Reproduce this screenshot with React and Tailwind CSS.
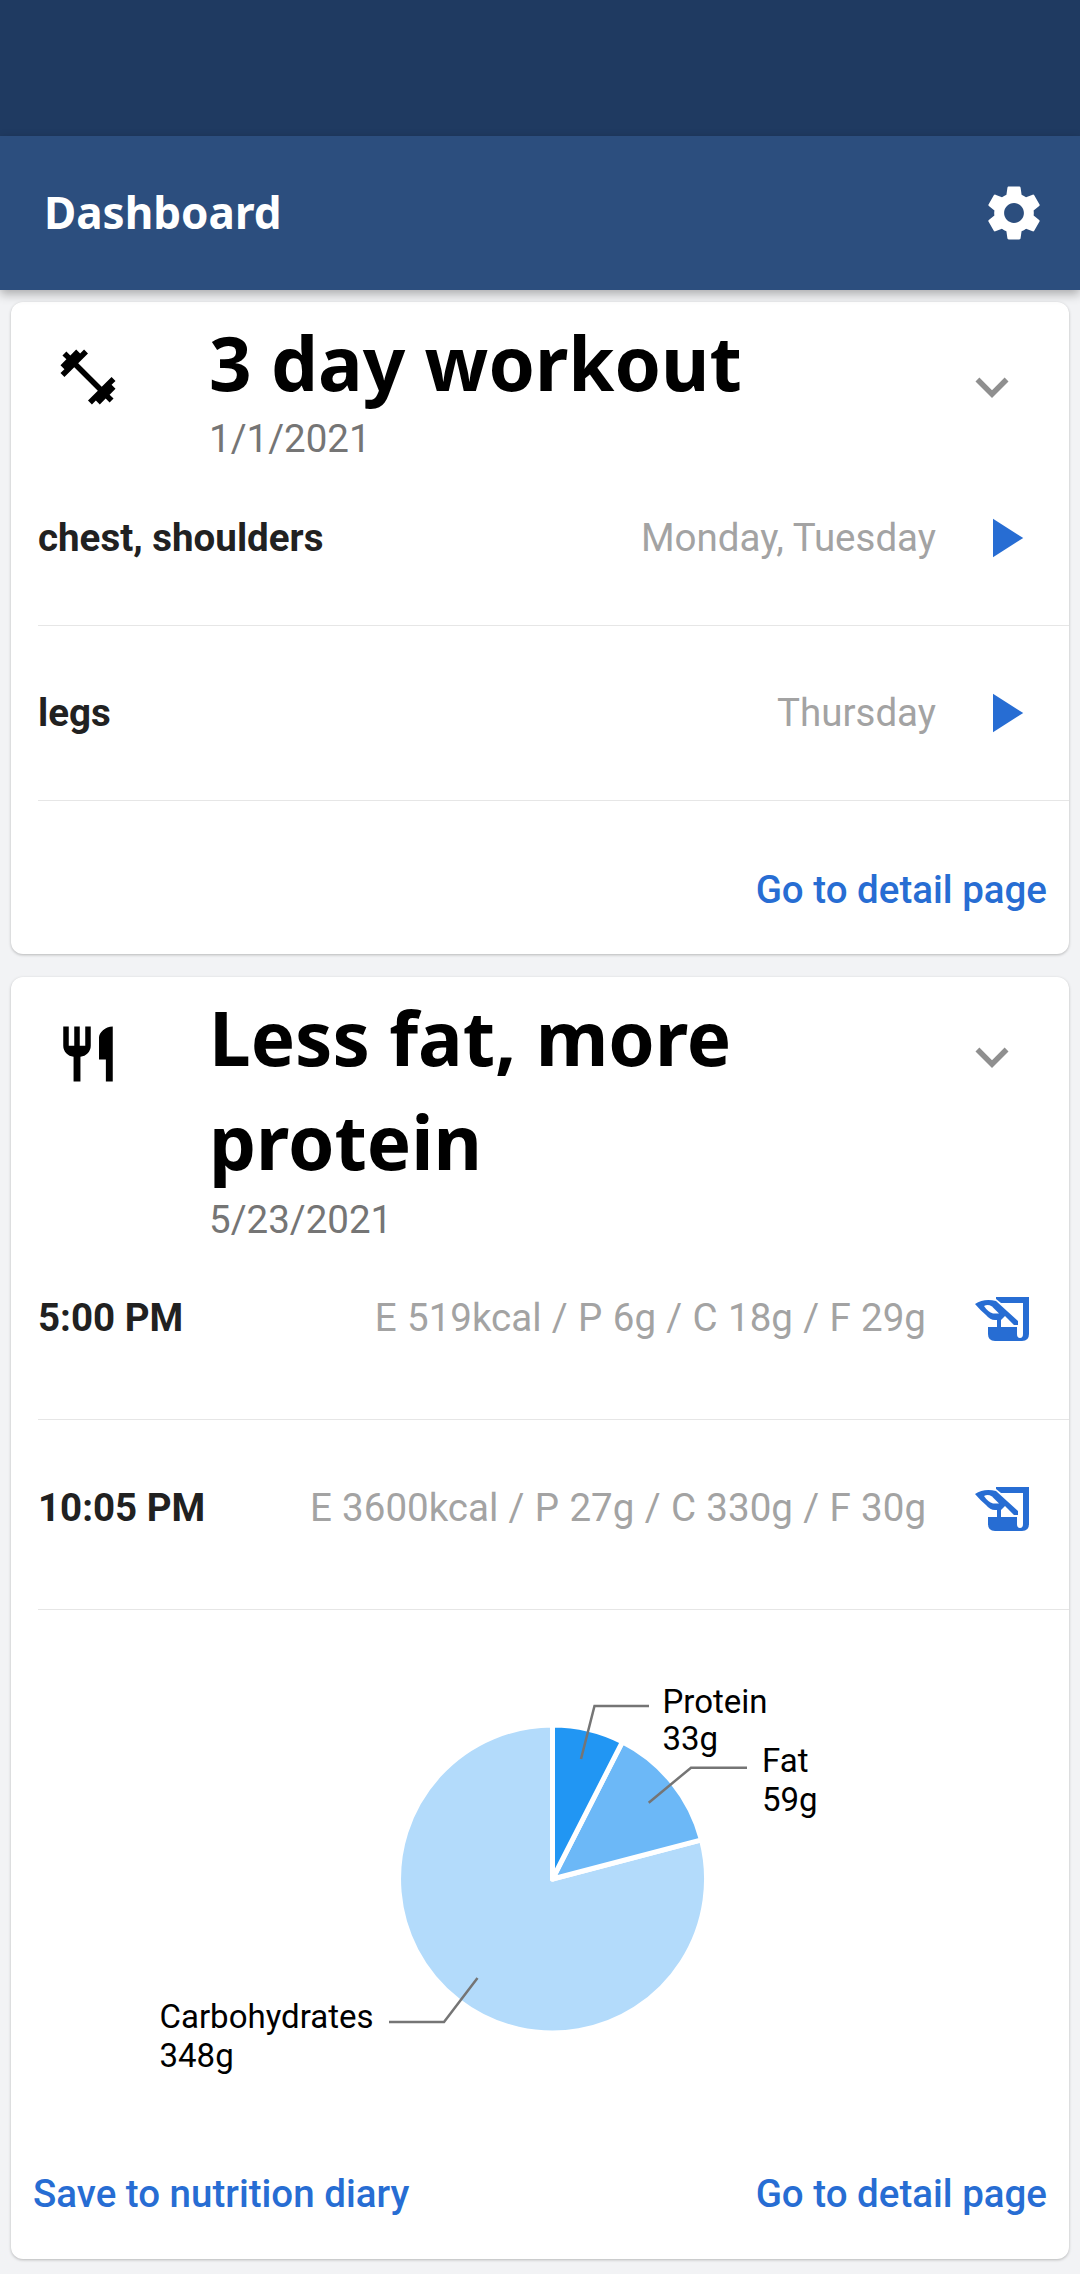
import { MdFitnessCenter, MdRestaurant, MdSettings, MdExpandMore, MdPlayArrow } from "react-icons/md";

const BLUE = "#276dd3";

function DiaryIcon() {
  return (
    <svg width="54" height="44" viewBox="0 0 54 44" fill={BLUE} className="block">
      <path d="M21 0H54V37Q54 44 47 44H20Q13 44 13 37V30H22V21H26V30H42V37Q42 41 45 41Q48 41 48 37V6H26L21 2Z" />
      <path d="M0 7Q9 1 21 4L43 24V28H39L30 19L26 23H20Q15 23 11 18Q5 13 0 7Z" />
      <path d="M9 9Q13 7 17 9.5L24 16.5H18Q13 15 9 9Z" fill="#fff" />
    </svg>
  );
}

function Row({ label, detail, icon, rowClass, detailClass = "" }) {
  return (
    <div className={`flex items-center ml-[27px] pr-[27px] border-b border-[#e6e6e6] ${rowClass}`}>
      <span className="text-[38.5px] leading-none font-bold text-[#212121] font-['Roboto',sans-serif]">{label}</span>
      <span className={`ml-auto text-[38.5px] leading-none text-[#a3a3a3] font-['Roboto',sans-serif] ${detailClass}`}>{detail}</span>
      {icon}
    </div>
  );
}

function CardHead({ icon, title, date, titleWidth, chevronClass, dateClass }) {
  return (
    <div className="flex -mb-[9px]">
      <div className="w-[198px] shrink-0">{icon}</div>
      <div className={`pt-[8px] ${titleWidth}`}>
        <h2 className="text-[74.5px] leading-[104px] font-bold text-black font-['Noto_Sans',sans-serif]">{title}</h2>
        <p className={`text-[38.5px] leading-[42px] text-[#757575] font-['Roboto',sans-serif] ${dateClass}`}>{date}</p>
      </div>
      <MdExpandMore className={`ml-auto mr-[44px] shrink-0 text-[#8f8f8f] ${chevronClass}`} size={66} />
    </div>
  );
}

function PieChart() {
  return (
    <svg width="1058" height="500" viewBox="0 0 1058 500" className="block">
      <g transform="translate(541.5 269)" stroke="#fff" strokeWidth="5" strokeLinejoin="round">
        <path d="M0 0L149 -39.1A154 154 0 1 1 0 -154Z" fill="#b3dbfb" />
        <path d="M0 0L69.9 -137.2A154 154 0 0 1 149 -39.1Z" fill="#6cb8f7" />
        <path d="M0 0L0 -154A154 154 0 0 1 69.9 -137.2Z" fill="#2196f3" />
      </g>
      <g fill="none" stroke="#757575" strokeWidth="2.5">
        <path d="M570 149L583.5 96H638" />
        <path d="M637.7 192.7L680 157.7H736" />
        <path d="M466.5 368L433 412H378" />
      </g>
      <g fill="#000" fontFamily="Roboto, sans-serif" fontSize="33">
        <text x="651.5" y="103">Protein</text>
        <text x="651.5" y="140">33g</text>
        <text x="751" y="162">Fat</text>
        <text x="751" y="201">59g</text>
        <text x="148.5" y="418">Carbohydrates</text>
        <text x="148.5" y="457">348g</text>
      </g>
    </svg>
  );
}

export default function App() {
  const link = "text-[38.5px] leading-none font-medium text-[#276dd3] font-['Roboto',sans-serif]";
  const play = <MdPlayArrow className="ml-[35px] mr-[5px]" size={66} color={BLUE} />;
  const diary = <div className="ml-[49px] mr-[13px]"><DiaryIcon /></div>;
  const spaced = "[word-spacing:0.8px]";

  return (
    <div className="w-[1080px] h-[2274px] bg-[#f2f3f5] overflow-hidden">
      <div className="h-[136px] bg-[#1f3a61]" />
      <header className="relative z-10 h-[154px] bg-[#2c4e7e] flex items-center justify-between pl-[44px] pr-[33px] shadow-[0_4px_10px_rgba(0,0,0,0.3)]">
        <h1 className="text-[44px] pb-[2px] font-bold text-white font-['Noto_Sans',sans-serif]">Dashboard</h1>
        <MdSettings size={66} color="#fff" />
      </header>

      <section className="mt-[12px] mx-[11px] h-[652px] bg-white rounded-[12px] shadow-[0_1px_3px_rgba(0,0,0,0.25)]">
        <CardHead
          icon={<MdFitnessCenter className="ml-[44px] mt-[42px]" size={66} color="#000" />}
          title="3 day workout"
          date="1/1/2021"
          chevronClass="mt-[52px]"
          dateClass="mt-[4px]"
        />
        <Row label="chest, shoulders" detail="Monday, Tuesday" icon={play} rowClass="h-[175px]" />
        <Row label="legs" detail="Thursday" icon={play} rowClass="h-[175px]" />
        <div className="flex justify-end items-center h-[154px] pt-[24px] pr-[22px]">
          <span className={link}>Go to detail page</span>
        </div>
      </section>

      <section className="mt-[23px] mx-[11px] h-[1282px] bg-white rounded-[12px] shadow-[0_1px_3px_rgba(0,0,0,0.25)]">
        <CardHead
          icon={<MdRestaurant className="ml-[44px] mt-[44px]" size={66} color="#000" />}
          title="Less fat, more protein"
          date="5/23/2021"
          titleWidth="w-[600px]"
          chevronClass="mt-[47px]"
          dateClass="mt-[6px] -mb-[2px]"
        />
        <Row label="5:00 PM" detail="E 519kcal / P 6g / C 18g / F 29g" detailClass={spaced} icon={diary} rowClass="h-[190px] pb-[12px]" />
        <Row label="10:05 PM" detail="E 3600kcal / P 27g / C 330g / F 30g" detailClass={spaced} icon={diary} rowClass="h-[190px] pb-[12px]" />
        <PieChart />
        <div className="flex justify-between items-center px-[22px] mt-[65px]">
          <span className={link}>Save to nutrition diary</span>
          <span className={link}>Go to detail page</span>
        </div>
      </section>
    </div>
  );
}
